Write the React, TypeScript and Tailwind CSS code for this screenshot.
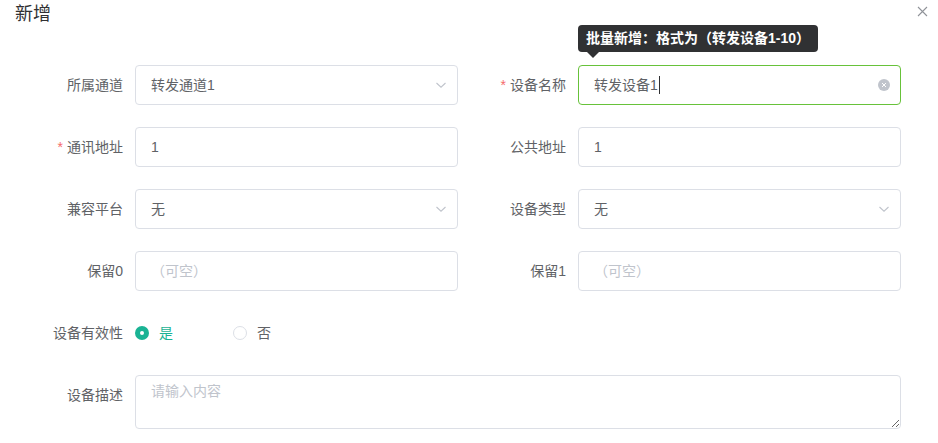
import React from "react";

const font = { fontFamily: '"Liberation Sans", "Noto Sans CJK SC", sans-serif' };

function Chevron() {
  return (
    <svg width="12" height="12" viewBox="0 0 12 12" className="shrink-0">
      <path d="M1.5 4 L6 8.2 L10.5 4" fill="none" stroke="#c0c4cc" strokeWidth="1.1" />
    </svg>
  );
}

function Label({ text, required }: { text: string; required?: boolean }) {
  return (
    <div className="w-[120px] shrink-0 pr-[12px] text-right text-[14px] text-[#606266] leading-[40px]">
      {required && <span className="text-[#f56c6c] mr-[4px]">*</span>}
      {text}
    </div>
  );
}

function Field({
  label,
  value,
  placeholder,
  select,
  required,
}: {
  label: string;
  value?: string;
  placeholder?: string;
  select?: boolean;
  required?: boolean;
}) {
  return (
    <div className="flex items-start">
      <Label text={label} required={required} />
      <div className="w-[323px] h-[40px] border border-[#dcdfe6] rounded-[4px] flex items-center pl-[15px] pr-[10px] text-[14px] bg-white">
        <span className={`flex-1 ${value ? "text-[#606266]" : "text-[#c0c4cc]"}`}>{value || placeholder}</span>
        {select && <Chevron />}
      </div>
    </div>
  );
}

export default function App() {
  return (
    <div className="w-[938px] h-[443px] bg-white relative overflow-hidden" style={font}>
      <div className="flex items-start justify-between pl-[15px] pr-[10px] pt-[2px] h-[30px]">
        <span className="text-[18px] text-[#303133] leading-[24px]">新增</span>
        <svg width="11" height="11" viewBox="0 0 11 11" className="mt-[4px]">
          <path d="M1 1 L10 10 M10 1 L1 10" stroke="#909399" strokeWidth="1.1" />
        </svg>
      </div>
      <div className="pl-[15px] pt-[35px] w-[901px]">
        <div className="grid grid-cols-2 gap-y-[22px]">
          <Field label="所属通道" value="转发通道1" select />
          <div className="flex items-start">
            <Label text="设备名称" required />
            <div className="relative w-[323px] h-[40px] border border-[#67c23a] rounded-[4px] flex items-center pl-[15px] pr-[10px] text-[14px]">
              <span className="text-[#606266]">转发设备1</span>
              <span className="inline-block w-px h-[18px] bg-[#303133] ml-[1px]" />
              <span className="flex-1" />
              <span className="w-[12px] h-[12px] rounded-full bg-[#c0c4cc] flex items-center justify-center">
                <svg width="6" height="6" viewBox="0 0 6 6">
                  <path d="M1 1 L5 5 M5 1 L1 5" stroke="#fff" strokeWidth="1" />
                </svg>
              </span>
              <div className="absolute left-[-1px] top-[-41px] h-[27px] px-[8px] rounded-[4px] bg-[#303133] text-white text-[14px] font-bold flex items-center whitespace-nowrap">
                批量新增：格式为（转发设备1-10）
                <span className="absolute left-[9px] bottom-[-6px] w-0 h-0 border-l-[6px] border-r-[6px] border-t-[6px] border-l-transparent border-r-transparent border-t-[#303133]" />
              </div>
            </div>
          </div>
          <Field label="通讯地址" value="1" required />
          <Field label="公共地址" value="1" />
          <Field label="兼容平台" value="无" select />
          <Field label="设备类型" value="无" select />
          <Field label="保留0" placeholder="（可空）" />
          <Field label="保留1" placeholder="（可空）" />
        </div>
        <div className="flex items-center h-[40px] mt-[22px]">
          <Label text="设备有效性" />
          <div className="flex items-center text-[14px]">
            <span className="w-[14px] h-[14px] rounded-full bg-[#1ab394] flex items-center justify-center">
              <span className="w-[4px] h-[4px] rounded-full bg-white" />
            </span>
            <span className="ml-[10px] text-[#1ab394]">是</span>
            <span className="ml-[60px] w-[14px] h-[14px] rounded-full border border-[#dcdfe6] bg-white" />
            <span className="ml-[10px] text-[#606266]">否</span>
          </div>
        </div>
        <div className="flex items-start mt-[22px]">
          <div className="w-[120px] shrink-0 pr-[12px] text-right text-[14px] text-[#606266] leading-[40px]">设备描述</div>
          <textarea
            className="w-[766px] h-[54px] border border-[#dcdfe6] rounded-[4px] px-[15px] py-[5px] text-[14px] text-[#606266] placeholder:text-[#c0c4cc] outline-none leading-[1.5]"
            placeholder="请输入内容"
            style={font}
          />
        </div>
      </div>
    </div>
  );
}
